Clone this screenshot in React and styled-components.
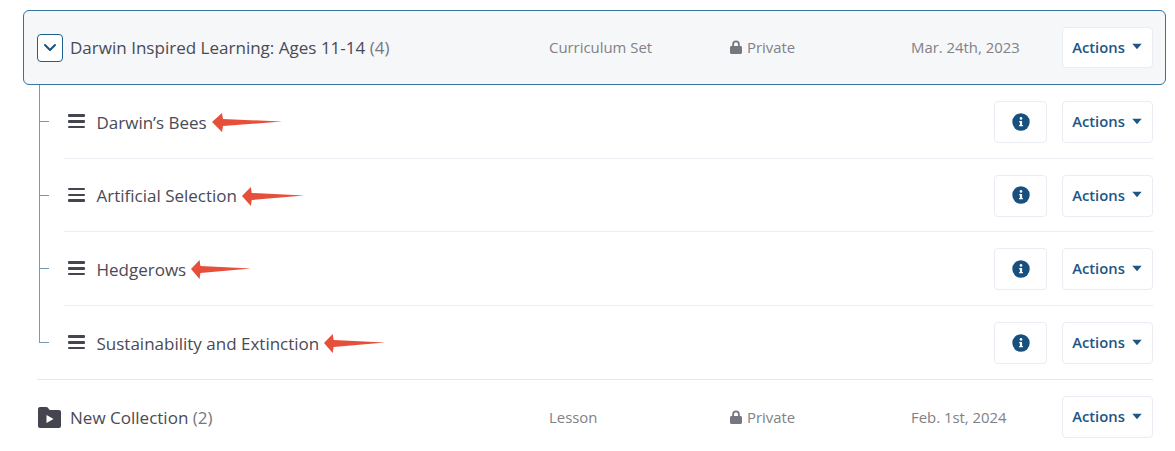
import React from "react";
import styled, { createGlobalStyle } from "styled-components";

const Global = createGlobalStyle`
	html, body {
		margin: 0;
		padding: 0;
		background: #fff;
		font-family: "Open Sans", "Liberation Sans", sans-serif;
	}
`;

const Page = styled.div`
	width: 1175px;
	height: 451px;
	overflow: hidden;
	box-sizing: border-box;
	padding: 10px 9px 0 23px;
`;

const Header = styled.div`
	height: 75px;
	box-sizing: border-box;
	display: flex;
	align-items: center;
	padding: 0 12px 0 13px;
	background: #f6f7f9;
	border: 1px solid #34749f;
	border-radius: 6px;
`;

const Toggle = styled.span`
	width: 26px;
	height: 28px;
	box-sizing: border-box;
	margin-right: 7px;
	display: flex;
	align-items: center;
	justify-content: center;
	background: #fff;
	border: 1px solid #1f5f8f;
	border-radius: 4px;
	color: #17527f;
`;

const Title = styled.span`
	flex: 0 0 479px;
	font-size: 17.05px;
	color: #4a4a55;
	white-space: nowrap;
`;

const Count = styled.span`
	color: #77777f;
`;

const Cell = styled.span`
	flex: 0 0 ${({ $w }) => $w}px;
	display: flex;
	align-items: center;
	gap: 5px;
	font-size: 14.9px;
	color: #818188;
	white-space: nowrap;
	padding-bottom: 1px;
`;

const ActionsButton = styled.button`
	width: 91px;
	height: ${({ $h }) => $h}px;
	flex: none;
	padding: 0 1px 2px 0;
	display: flex;
	align-items: center;
	justify-content: center;
	gap: 7px;
	background: #fff;
	border: 1px solid #e9ecf3;
	border-radius: 4px;
	font-family: inherit;
	font-size: 14.8px;
	font-weight: 600;
	color: #1e5583;
`;

const InfoButton = styled.button`
	width: 53px;
	height: 42px;
	padding: 0 0 1px;
	display: flex;
	align-items: center;
	justify-content: center;
	background: #fff;
	border: 1px solid #e9ecf3;
	border-radius: 4px;
`;

const Tree = styled.div`
	position: relative;
	margin-left: 41px;
	margin-right: 13px;
	&::before {
		content: "";
		position: absolute;
		left: -25px;
		top: 0;
		bottom: 36px;
		width: 1px;
		background: #6f9bbd;
	}
`;

const Row = styled.div`
	position: relative;
	height: 73.5px;
	box-sizing: border-box;
	padding-top: 2px;
	display: flex;
	align-items: center;
	gap: 13px;
	border-bottom: ${({ $last }) => ($last ? "none" : "1px solid #eceef4")};
	&::before {
		content: "";
		position: absolute;
		left: -25px;
		top: 50%;
		width: 10px;
		height: 1px;
		background: #6f9bbd;
	}
`;

const Handle = styled.span`
	margin: -2px 0 0 4px;
	width: 17px;
	height: 14px;
	display: flex;
	flex-direction: column;
	justify-content: space-between;
	flex: none;
	&::before,
	&::after,
	& > i {
		content: "";
		display: block;
		height: 2.5px;
		background: #45454f;
		border-radius: 1px;
	}
`;

const RowName = styled.span`
	flex: 1;
	display: flex;
	align-items: center;
	gap: 5px;
	font-size: 17px;
	color: #4a4a55;
	white-space: nowrap;
	margin-left: -1.5px;
`;

const RowButtons = styled.div`
	display: flex;
	gap: 15px;
`;

const Divider = styled.div`
	height: 1px;
	margin: 0 13px 0 14px;
	background: #e3e6ef;
`;

const Footer = styled.div`
	height: 74px;
	display: flex;
	align-items: center;
	padding: 0 13px 0 15px;
`;

const FolderWrap = styled.span`
	display: flex;
	margin-right: 9px;
`;

const Chevron = () => (
	<svg width="14" height="9" viewBox="0 0 14 9" fill="none">
		<path d="M2 2l5 5 5-5" stroke="currentColor" strokeWidth="2" strokeLinecap="round" strokeLinejoin="round" />
	</svg>
);

const Caret = () => (
	<svg width="10" height="7" viewBox="0 0 10 7">
		<path d="M0.3 0.8h9.4L5 6.2z" fill="#1e5583" />
	</svg>
);

const Lock = () => (
	<svg width="12" height="14" viewBox="0 0 12 14">
		<path
			d="M2.2 6V4.200a3.800 3.800 0 0 1 7.600 0V6h.7c.8 0 1.500.6 1.500 1.400v5.100c0 .8-.7 1.500-1.500 1.500h-9C.7 14 0 13.300 0 12.500V7.400C0 6.600.7 6 1.500 6zM4 6h4V4.200a2 2 0 0 0-4 0z"
			fill="#77777f"
		/>
	</svg>
);

const Info = () => (
	<svg width="18" height="18" viewBox="0 0 18 18">
		<circle cx="9" cy="9" r="8.700" fill="#17507f" />
		<circle cx="9" cy="5.400" r="1.300" fill="#fff" />
		<path d="M7.200 8h2.900v4h.8v1.300H7.100V12h.8V9.300h-.7z" fill="#fff" />
	</svg>
);

const Folder = () => (
	<svg width="23" height="21" viewBox="0 0 23 21">
		<path
			d="M2 0h6.200c.6 0 1.100.2 1.500.6l2 2.400H21c1.100 0 2 .9 2 2v14c0 1.100-.9 2-2 2H2c-1.100 0-2-.9-2-2V2C0 .9.900 0 2 0z"
			fill="#45454f"
		/>
		<path d="M8.500 8l7 4-7 4z" fill="#fff" />
	</svg>
);

const Arrow = ({ width }) => (
	<svg width={width} height="20" viewBox="0 0 70 20" preserveAspectRatio="none">
		<path d="M0 10L10 1l1 6 59 2.500L11 14l-1 6z" fill="#e6503a" />
	</svg>
);

const items = [
	{ name: "Darwin’s Bees", arrow: 70 },
	{ name: "Artificial Selection", arrow: 62 },
	{ name: "Hedgerows", arrow: 60 },
	{ name: "Sustainability and Extinction", arrow: 61 }
];

const App = () => (
	<Page>
		<Global />
		<Header>
			<Toggle>
				<Chevron />
			</Toggle>
			<Title>
				Darwin Inspired Learning: Ages 11-14 <Count>(4)</Count>
			</Title>
			<Cell $w={181}>Curriculum Set</Cell>
			<Cell $w={181}>
				<Lock />
				Private
			</Cell>
			<Cell $w={151}>Mar. 24th, 2023</Cell>
			<ActionsButton $h={41}>
				Actions <Caret />
			</ActionsButton>
		</Header>
		<Tree>
			{items.map((item, i) => (
				<Row key={item.name} $last={i === items.length - 1}>
					<Handle>
						<i />
					</Handle>
					<RowName>
						{item.name}
						<Arrow width={item.arrow} />
					</RowName>
					<RowButtons>
						<InfoButton>
							<Info />
						</InfoButton>
						<ActionsButton $h={42}>
							Actions <Caret />
						</ActionsButton>
					</RowButtons>
				</Row>
			))}
		</Tree>
		<Divider />
		<Footer>
			<FolderWrap>
				<Folder />
			</FolderWrap>
			<Title>
				New Collection <Count>(2)</Count>
			</Title>
			<Cell $w={181}>Lesson</Cell>
			<Cell $w={181}>
				<Lock />
				Private
			</Cell>
			<Cell $w={151}>Feb. 1st, 2024</Cell>
			<ActionsButton $h={42}>
				Actions <Caret />
			</ActionsButton>
		</Footer>
	</Page>
);

export default App;
